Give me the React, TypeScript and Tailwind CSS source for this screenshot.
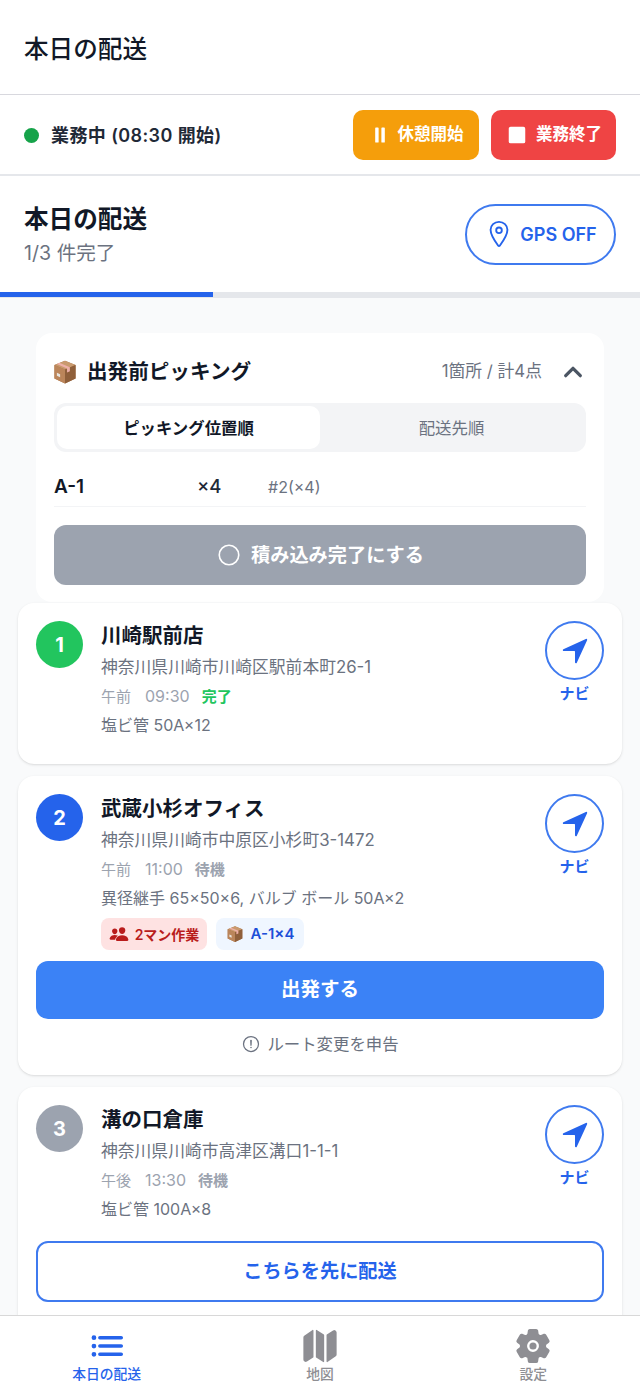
import React from 'react'
import {
  IoPause,
  IoStop,
  IoLocationOutline,
  IoChevronUp,
  IoEllipseOutline,
  IoNavigate,
  IoPeople,
  IoAlertCircleOutline,
  IoList,
  IoMap,
  IoSettings,
} from 'react-icons/io5'

function PackageIcon({ size }: { size: number }) {
  return (
    <svg width={size} height={size} viewBox="0 0 32 32" className="shrink-0">
      <path d="M16 2 L29 7.5 L29 24 L16 30 L3 24 L3 7.5 Z" fill="#a9744a" />
      <path d="M16 2 L29 7.5 L16 13 L3 7.5 Z" fill="#c99a6e" />
      <path d="M3 7.5 L16 13 L16 30 L3 24 Z" fill="#bb855a" />
      <path d="M16 13 L29 7.5 L29 24 L16 30 Z" fill="#8f5f3a" />
      <path d="M9 4.7 L22 10.2 L22 15 L18.5 16.5 L18.5 11.7 L6 6.2 Z" fill="#eeb0a8" />
      <path d="M6 17 L10 18.8 L10 22.5 L6 20.7 Z" fill="#e8e4de" />
    </svg>
  )
}

function NaviButton() {
  return (
    <div className="flex flex-col items-center shrink-0">
      <div className="w-[59px] h-[59px] rounded-full border-2 border-[#3f7aef] flex items-center justify-center text-[#2563eb]">
        <IoNavigate size={30} />
      </div>
      <span className="text-[15px] leading-[20px] mt-[4px] font-semibold text-[#2563eb]">ナビ</span>
    </div>
  )
}

function StopHead({
  no,
  color,
  name,
  address,
  period,
  time,
  status,
  statusClass,
  items,
}: {
  no: number
  color: string
  name: string
  address: string
  period: string
  time: string
  status: string
  statusClass: string
  items: string
}) {
  return (
    <div className="flex items-start">
      <div className={`w-[47px] h-[47px] rounded-full ${color} text-white text-[20px] font-bold flex items-center justify-center shrink-0`}>
        {no}
      </div>
      <div className="flex-1 ml-[18px]">
        <p className="text-[20.5px] leading-[30px] font-semibold text-[#111827]">{name}</p>
        <p className="text-[16.8px] leading-[24px] mt-[4px] text-[#6b7280]">{address}</p>
        <p className="text-[15px] leading-[22px] mt-[6px] text-[#9ca3af]">
          {period}
          <span className="ml-[14px] text-[16px]">{time}</span>
          <span className={`ml-[12px] font-semibold ${statusClass}`}>{status}</span>
        </p>
        <p className="text-[16px] leading-[22px] mt-[6px] text-[#6b7280]">{items}</p>
      </div>
      <NaviButton />
    </div>
  )
}

export default function App() {
  return (
    <div className="h-[1387px] w-[640px] flex flex-col overflow-hidden bg-[#f9fafb] font-['Inter','Noto_Sans_CJK_JP',sans-serif]">
      {/* Header */}
      <div className="h-[95px] shrink-0 bg-white border-b border-[#d8d8de] flex items-center px-[24px] pt-[4px]">
        <h1 className="text-[24.6px] font-medium text-[#111827]">本日の配送</h1>
      </div>

      {/* Work status */}
      <div className="h-[81px] shrink-0 bg-white border-b-2 border-[#e5e7eb] flex items-center justify-between px-[24px]">
        <div className="flex items-center pt-[2px]">
          <span className="w-[15px] h-[15px] rounded-full bg-[#16a34a]" />
          <span className="ml-[12px] text-[18px] tracking-[0.4px] font-semibold text-[#1f2937]">業務中 (08:30 開始)</span>
        </div>
        <div className="flex gap-[12px]">
          <button className="w-[126px] h-[50px] rounded-[10px] bg-[#f59e0b] text-white text-[16.5px] font-semibold flex items-center justify-center gap-[7px]">
            <IoPause size={22} />
            休憩開始
          </button>
          <button className="w-[125px] h-[50px] rounded-[10px] bg-[#ef4444] text-white text-[16.5px] font-semibold flex items-center justify-center gap-[7px]">
            <IoStop size={24} />
            業務終了
          </button>
        </div>
      </div>

      {/* Summary */}
      <div className="h-[116px] shrink-0 bg-white flex items-center justify-between px-[24px]">
        <div>
          <h2 className="text-[24.6px] leading-[32px] font-bold text-[#111827]">本日の配送</h2>
          <p className="text-[19.6px] leading-[26px] mt-[5px] text-[#6b7280]">1/3 件完了</p>
        </div>
        <button className="w-[151px] h-[61px] rounded-full border-2 border-[#3f7aef] bg-white text-[#2563eb] text-[18px] font-semibold flex items-center justify-center gap-[6px]">
          <IoLocationOutline size={30} />
          GPS OFF
        </button>
      </div>

      {/* Progress */}
      <div className="h-[6px] shrink-0 bg-[#e5e7eb]">
        <div className="h-[5px] w-[213px] bg-[#2563eb]" />
      </div>

      <div className="flex-1 overflow-hidden px-[18px] pt-[35px]">
        {/* Picking */}
        <div className="mx-[18px] bg-white rounded-[16px] px-[18px] pt-[20px] h-[269px]">
          <div className="flex items-center h-[38px]">
            <span className="-ml-[2px]">
              <PackageIcon size={26} />
            </span>
            <span className="ml-[9px] text-[20.6px] font-semibold text-[#111827]">出発前ピッキング</span>
            <span className="ml-auto text-[16.8px] text-[#6b7280]">1箇所 / 計4点</span>
            <IoChevronUp size={26} className="ml-[18px] text-[#4b5563] [&_path]:[stroke-width:64]" />
          </div>
          <div className="mt-[12px] h-[49px] rounded-[12px] bg-[#f3f4f6] p-[3px] flex">
            <div className="w-[263px] rounded-[10px] bg-white flex items-center justify-center pt-[1px] text-[16.4px] font-semibold text-[#111827]">
              ピッキング位置順
            </div>
            <div className="flex-1 flex items-center justify-center pt-[1px] text-[16.4px] text-[#6b7280]">配送先順</div>
          </div>
          <div className="flex items-center h-[55px] pt-[16px] border-b border-[#f3f4f6]">
            <span className="w-[143px] text-[19px] font-semibold text-[#111827]">A-1</span>
            <span className="w-[71px] text-[18.5px] font-medium text-[#1f2937]">×4</span>
            <span className="text-[16px] text-[#6b7280]">#2(×4)</span>
          </div>
          <button className="w-full mt-[18px] h-[60px] rounded-[12px] bg-[#9ca3af] text-white text-[19.2px] font-semibold flex items-center justify-center gap-[9px]">
            <IoEllipseOutline size={26} />
            積み込み完了にする
          </button>
        </div>

        {/* Stops */}
        <div className="mt-[1px] bg-white rounded-[16px] shadow-sm p-[18px] h-[161px]">
          <StopHead
            no={1}
            color="bg-[#22c55e]"
            name="川崎駅前店"
            address="神奈川県川崎市川崎区駅前本町26-1"
            period="午前"
            time="09:30"
            status="完了"
            statusClass="text-[#22c55e]"
            items="塩ビ管 50A×12"
          />
        </div>

        <div className="mt-[12px] bg-white rounded-[16px] shadow-sm px-[18px] pt-[18px] h-[299px]">
          <StopHead
            no={2}
            color="bg-[#2563eb]"
            name="武蔵小杉オフィス"
            address="神奈川県川崎市中原区小杉町3-1472"
            period="午前"
            time="11:00"
            status="待機"
            statusClass="text-[#9ca3af]"
            items="異径継手 65×50×6, バルブ ボール 50A×2"
          />
          <div className="flex gap-[9px] ml-[65px] mt-[9px]">
            <span className="h-[32px] w-[106px] rounded-[8px] bg-[#fee2e2] text-[#b91c1c] text-[14px] font-semibold flex items-center justify-center gap-[6px]">
              <IoPeople size={20} />
              2マン作業
            </span>
            <span className="h-[32px] w-[88px] rounded-[8px] bg-[#eff6ff] text-[#1d4ed8] text-[15px] font-semibold flex items-center justify-center gap-[7px]">
              <PackageIcon size={18} />
              A-1×4
            </span>
          </div>
          <button className="w-full mt-[11px] h-[58px] rounded-[12px] bg-[#3b82f6] text-white text-[19.5px] font-semibold flex items-center justify-center">
            出発する
          </button>
          <div className="mt-[13px] h-[24px] flex items-center justify-center gap-[6px] text-[16.4px] text-[#6b7280]">
            <IoAlertCircleOutline size={20} />
            ルート変更を申告
          </div>
        </div>

        <div className="mt-[12px] bg-white rounded-[16px] shadow-sm px-[18px] pt-[18px] h-[299px]">
          <StopHead
            no={3}
            color="bg-[#9ca3af]"
            name="溝の口倉庫"
            address="神奈川県川崎市高津区溝口1-1-1"
            period="午後"
            time="13:30"
            status="待機"
            statusClass="text-[#9ca3af]"
            items="塩ビ管 100A×8"
          />
          <button className="w-full mt-[21px] h-[61px] rounded-[12px] border-2 border-[#3f7aef] bg-white text-[#2563eb] text-[19.2px] font-semibold flex items-center justify-center">
            こちらを先に配送
          </button>
        </div>
      </div>

      {/* Bottom nav */}
      <div className="h-[72px] shrink-0 bg-white border-t border-[#d8d8d8] flex">
        <div className="flex-1 flex flex-col items-center pt-[11px] text-[#2563eb]">
          <IoList size={38} />
          <span className="text-[13.8px] leading-[18px] font-medium">本日の配送</span>
        </div>
        <div className="flex-1 flex flex-col items-center pt-[11px] text-[#8e8e93]">
          <IoMap size={38} />
          <span className="text-[13.8px] leading-[18px] font-medium">地図</span>
        </div>
        <div className="flex-1 flex flex-col items-center pt-[11px] text-[#8e8e93]">
          <IoSettings size={38} />
          <span className="text-[13.8px] leading-[18px] font-medium">設定</span>
        </div>
      </div>
    </div>
  )
}
